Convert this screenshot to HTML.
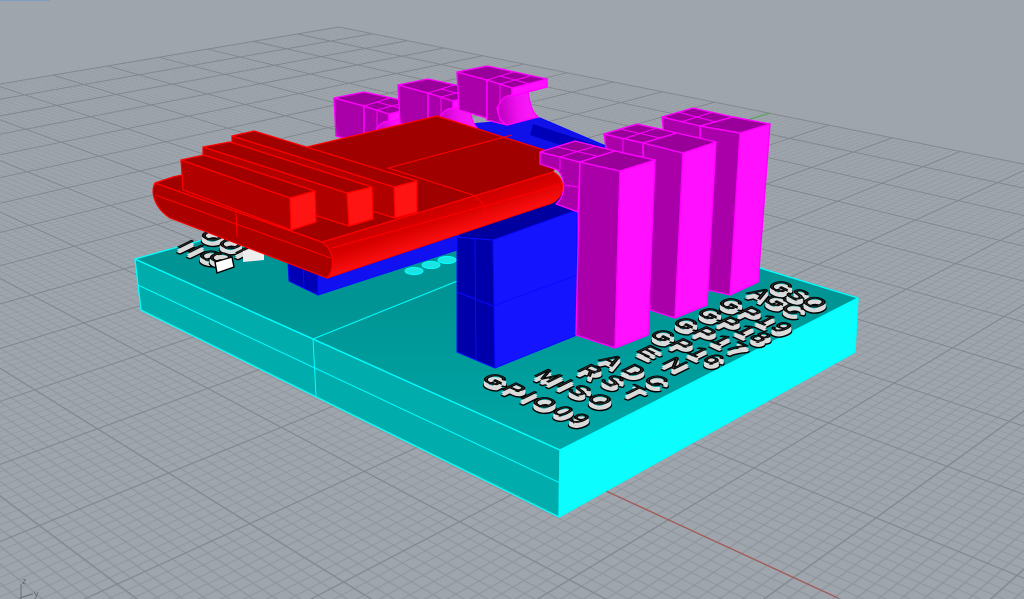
<!DOCTYPE html>
<html><head><meta charset="utf-8"><title>3D viewport</title>
<style>
html,body{margin:0;padding:0;background:#9ea5ad;width:1024px;height:599px;overflow:hidden}
#vp{position:absolute;left:0;top:0;width:1024px;height:599px;overflow:hidden;contain:strict;background:#9ea5ad}
#grid{position:absolute;left:0;top:0;width:1850px;height:1400px;transform-origin:0 0;
transform:matrix3d(.24023,.0582,0,-.00024766,-.49046,.060988,0,-.00025518,0,0,1,0,339,27,0,1);
background-color:#9ea5ad;
background-image:linear-gradient(to right,#8e949c 1px,transparent 1px),linear-gradient(to bottom,#8e949c 1px,transparent 1px);
background-size:10px 10px,10px 10px}
svg{display:block;position:absolute;left:0;top:0}
.c{stroke:#0ff;stroke-width:1.3;stroke-linejoin:round}
.b{stroke:#0a0aff;stroke-width:1;stroke-linejoin:round}
.m{stroke:#f0f;stroke-width:1.4;stroke-linejoin:round}
.r{stroke:#f00;stroke-width:1.2;stroke-linejoin:round}
.sc{stroke:#0ff;stroke-width:1;fill:none}
.sb{stroke:#0a0aff;stroke-width:1;fill:none}
.sm{stroke:#f0f;stroke-width:1;fill:none}
.sr{stroke:#f00;stroke-width:1;fill:none}
text.a,text.w,text.t{font-family:"Liberation Sans",sans-serif;font-size:23px;stroke-linejoin:round}
text.a{fill:#000;stroke:#000;stroke-width:3}
text.w{fill:#d6d6d6;stroke:#dcdcdc;stroke-width:1.5}
text.t{fill:#3a3a3a;stroke:#000;stroke-width:1.2}
text.ax{font-family:"Liberation Sans",sans-serif;font-size:9px;fill:#636870}
</style></head><body>
<div id="vp">
<div id="grid"></div>
<svg width="1024" height="599" viewBox="0 0 1024 599" xmlns="http://www.w3.org/2000/svg">
<defs>
<linearGradient id="top" x1="0" y1="300" x2="0" y2="450" gradientUnits="userSpaceOnUse"><stop offset="0" stop-color="#009494"/><stop offset="1" stop-color="#00a6a6"/></linearGradient>
<linearGradient id="rim" x1="425" y1="205" x2="442" y2="255" gradientUnits="userSpaceOnUse"><stop offset="0" stop-color="#c00000"/><stop offset=".35" stop-color="#d80000"/><stop offset=".75" stop-color="#ff1010"/><stop offset="1" stop-color="#e00000"/></linearGradient>
<linearGradient id="cyl" x1="497" y1="110" x2="538" y2="105" gradientUnits="userSpaceOnUse"><stop offset="0" stop-color="#b800b8"/><stop offset=".5" stop-color="#f010f0"/><stop offset="1" stop-color="#ff20ff"/></linearGradient>
</defs>
<rect x="0" y="0" width="50" height="1" fill="#7f9ec4"/>
<path fill="none" stroke="#82878e" stroke-width="1" d="M339 27L1100 179.4M297.5 34L1100 204.3M253.8 41.4L1100 232.6M207.7 49.2L1100 264.5M159 57.3L1100 300.9M107.4 66L1100 343.3M52.8 75.1L1100 392.6M-5.3 84.9L1100 451.4M-67.1 95.3L1100 522.2M-133 106.3L1100 609.1M-203.4 118.2L1100 718.7M-278.8 130.8L1100 860.5M-359.7 144.4L1100 1052M-446.9 159L1100 1324M-540.9 174.8L1100 1742"/>
<path fill="none" stroke="#82878e" stroke-width="1" d="M339 27L-100 100.8M372.3 33.7L-100 116.9M407.3 40.7L-100 134.4M444.1 48L-100 153.7M483 55.8L-100 175.2M524.1 64L-100 199.3M567.6 72.7L-100 226.3M613.6 82L-100 257M662.5 91.7L-100 292M714.6 102.1L-100 332.2M770 113.2L-100 379.1M829.3 125.1L-100 434.7M892.7 137.7L-100 501M960.7 151.3L-100 582M1033.9 166L-100 683M1112.9 181.8L-100 812.6M1198.4 198.9L-100 984.7M1291.1 217.4L-100 1223.7M1392.2 237.6L-100 1580"/>
<line x1="500" y1="442" x2="838" y2="598" stroke="#a8564f" stroke-width="1.2"/>
<line x1="770" y1="113" x2="650" y2="150" stroke="#5fa05f" stroke-width="1.2"/>

<!-- axis icon -->
<path d="M21 584V599M20 598L33 594" stroke="#6a6f77" fill="none" stroke-width="1"/>
<text class="ax" x="22" y="584">z</text>
<text class="ax" x="34" y="597">y</text>

<!-- cyan slab -->
<polygon points="135,259 141,310 559,517 560,450" fill="#00acac" class="c"/>
<polygon points="560,450 559,517 855,352 858,298" fill="#0cfdfd" class="c"/>
<polygon points="135,259 446,172 858,298 560,450" fill="url(#top)" class="c"/>
<path class="sc" d="M138,285L560,483L857,325M313,339L316,396M313,339L460,280"/>
<ellipse cx="414" cy="271" rx="9" ry="3.6" fill="#1ce4e4" stroke="#0ff"/>
<ellipse cx="431" cy="265" rx="9" ry="3.6" fill="#1ce4e4" stroke="#0ff"/>
<ellipse cx="447" cy="260" rx="9" ry="3.6" fill="#1ce4e4" stroke="#0ff"/>

<!-- left letters -->
<g>
<text class="a" transform="matrix(.91 .42 -.85 .42 198 241)" textLength="46">OOI</text><text class="w" transform="matrix(.91 .42 -.85 .42 198 240)" textLength="46">OOI</text><text class="w" transform="matrix(.91 .42 -.85 .42 198 238)" textLength="46">OOI</text><text class="t" transform="matrix(.91 .42 -.85 .42 198 235)" textLength="46">OOI</text>
<text class="a" transform="matrix(.91 .42 -.85 .42 176 252)" textLength="40">IIO</text><text class="w" transform="matrix(.91 .42 -.85 .42 176 251)" textLength="40">IIO</text><text class="w" transform="matrix(.91 .42 -.85 .42 176 249)" textLength="40">IIO</text><text class="t" transform="matrix(.91 .42 -.85 .42 176 246)" textLength="40">IIO</text>
<text class="a" transform="matrix(.91 .42 -.85 .42 206 263)">O</text><text class="w" transform="matrix(.91 .42 -.85 .42 206 262)">O</text><text class="w" transform="matrix(.91 .42 -.85 .42 206 260)">O</text><text class="t" transform="matrix(.91 .42 -.85 .42 206 257)">O</text>
</g>
<polygon points="215,262 232,257 234,267 217,273" fill="#fff" stroke="#000" stroke-width="1.4"/>
<polygon points="243,251 264,247 264,260 243,262" fill="#eee"/>

<!-- blue boxes -->
<polygon points="288,262 289,281 318,295 318,270" fill="#0000b4" class="b"/>
<polygon points="318,295 457,250 457,225 318,270" fill="#1010f0" class="b"/>
<path class="sb" d="M303,268L304,288"/>
<polygon points="470,124 540,118 620,152 560,170 470,135" fill="#1010e8" class="b"/>
<polygon points="533,124 617,152 600,158 530,135" fill="#0000b8"/>
<polygon points="457,237 493,240 495,368 457,352" fill="#0000aa" class="b"/>
<polygon points="493,240 577,210 577,335 495,368" fill="#1414ff" class="b"/>
<polygon points="457,237 493,240 577,210 560,190 470,225" fill="#0000a0" class="b"/>
<path class="sb" d="M475,238L476,360M457,292L493,306L577,275"/>

<!-- back magenta pieces -->
<g transform="translate(-123,26)">
<polygon points="457,72 487,80 487,118 459,110" fill="#aa00aa" class="m"/>
<polygon points="487,80 512,88 512,96 505,98 497,108 500,120 507,125 487,120" fill="#aa00aa" class="m"/>
<path d="M507,96L528,92C530,105 532,112 538,117L507,125C495,118 495,102 507,96Z" fill="url(#cyl)" class="m"/>
<polygon points="512,88 547,79 547,87 528,92 512,96" fill="#ff10ff" class="m"/>
<polygon points="457,72 487,66 547,79 512,88 487,80" fill="#990099" class="m"/>
<path class="sm" d="M487,80L513,72M500,76L530,84M500,84L530,76M500,84V102"/>
</g>
<g transform="translate(-59,13)">
<polygon points="457,72 487,80 487,118 459,110" fill="#aa00aa" class="m"/>
<polygon points="487,80 512,88 512,96 505,98 497,108 500,120 507,125 487,120" fill="#aa00aa" class="m"/>
<path d="M507,96L528,92C530,105 532,112 538,117L507,125C495,118 495,102 507,96Z" fill="url(#cyl)" class="m"/>
<polygon points="512,88 547,79 547,87 528,92 512,96" fill="#ff10ff" class="m"/>
<polygon points="457,72 487,66 547,79 512,88 487,80" fill="#990099" class="m"/>
<path class="sm" d="M487,80L513,72M500,76L530,84M500,84L530,76M500,84V102"/>
</g>
<g>
<polygon points="457,72 487,80 487,118 459,110" fill="#aa00aa" class="m"/>
<polygon points="487,80 512,88 512,96 505,98 497,108 500,120 507,125 487,120" fill="#aa00aa" class="m"/>
<path d="M507,96L528,92C530,105 532,112 538,117L507,125C495,118 495,102 507,96Z" fill="url(#cyl)" class="m"/>
<polygon points="512,88 547,79 547,87 528,92 512,96" fill="#ff10ff" class="m"/>
<polygon points="457,72 487,66 547,79 512,88 487,80" fill="#990099" class="m"/>
<path class="sm" d="M487,80L513,72M500,76L530,84M500,84L530,76M500,84V102"/>
</g>

<!-- red part -->
<path d="M155,183L322,242C335,250 335,270 327,278L170,218C155,208 150,193 155,183Z" fill="#aa0000" class="r"/>
<path d="M322,242L553,172C566,178 566,196 552,203L327,278C335,270 335,250 322,242Z" fill="url(#rim)" class="r"/>
<polygon points="437,116 560,155 553,172 322,242 155,183 173,177 307,147" fill="#a00000" class="r"/>
<path class="sr" d="M155,195L331,258M236,210L237,237M512,135L388,168L473,195C482,200 487,210 487,220M332,248L560,185"/>
<!-- bar 3 -->
<polygon points="232,136 394,187 395,218 232,170" fill="#b00000" class="r"/>
<polygon points="232,136 254,131 417,181 394,187" fill="#a00000" class="r"/>
<polygon points="394,187 417,181 417,212 395,218" fill="#ff1414" class="r"/>
<!-- bar 2 -->
<polygon points="203,147 347,193 349,226 203,180" fill="#b00000" class="r"/>
<polygon points="203,147 230,142 372,187 347,193" fill="#a00000" class="r"/>
<polygon points="347,193 372,187 373,219 349,226" fill="#ff1414" class="r"/>
<!-- bar 1 -->
<polygon points="181,160 290,198 291,230 183,190" fill="#b00000" class="r"/>
<polygon points="181,160 204,155 315,191 290,198" fill="#a00000" class="r"/>
<polygon points="290,198 315,191 316,222 291,230" fill="#ff1414" class="r"/>

<!-- column 3 -->
<polygon points="662,117 700,126 700,150 664,135" fill="#aa00aa" class="m"/>
<polygon points="700,126 740,133 730,295 708,290" fill="#aa00aa" class="m"/>
<polygon points="740,133 770,124 758,282 730,295" fill="#ff10ff" class="m"/>
<polygon points="662,117 693,108 733,117 700,126" fill="#990099" class="m"/>
<polygon points="700,126 733,117 770,124 740,133" fill="#990099" class="m"/>
<path class="sm" d="M677,112L716,122M681,122L713,112"/>
<!-- column 2 -->
<polygon points="604,134 643,143 643,170 606,148" fill="#aa00aa" class="m"/>
<polygon points="643,143 683,153 675,318 650,310" fill="#aa00aa" class="m"/>
<polygon points="683,153 716,142 707,305 675,318" fill="#ff10ff" class="m"/>
<polygon points="604,134 637,124 677,133 643,143" fill="#990099" class="m"/>
<polygon points="643,143 677,133 716,142 683,153" fill="#990099" class="m"/>
<path class="sm" d="M620,129L660,138M623,139L657,128M623,138V160"/>
<!-- column 1 -->
<path d="M540,152L580,162L578,212L556,204C566,195 566,180 558,170L540,164Z" fill="#aa00aa" class="m"/>
<path class="sm" d="M560,158V170M565,185L578,187"/>
<polygon points="580,162 620,171 615,348 576,335" fill="#aa00aa" class="m"/>
<polygon points="620,171 655,160 648,335 615,348" fill="#ff10ff" class="m"/>
<polygon points="540,152 575,141 615,151 580,162" fill="#990099" class="m"/>
<polygon points="580,162 615,151 655,160 620,171" fill="#990099" class="m"/>
<path class="sm" d="M557,147L597,156M560,157L595,146"/>

<!-- letters -->
<g>
<text class="a" transform="matrix(.91 .42 -.85 .42 480 385)" textLength="108">GPIO09</text><text class="w" transform="matrix(.91 .42 -.85 .42 480 384)" textLength="108">GPIO09</text><text class="w" transform="matrix(.91 .42 -.85 .42 480 382)" textLength="108">GPIO09</text><text class="t" transform="matrix(.91 .42 -.85 .42 480 379)" textLength="108">GPIO09</text>
<text class="a" transform="matrix(.91 .42 -.85 .42 533 381)" textLength="75">MISO</text><text class="w" transform="matrix(.91 .42 -.85 .42 533 380)" textLength="75">MISO</text><text class="w" transform="matrix(.91 .42 -.85 .42 533 378)" textLength="75">MISO</text><text class="t" transform="matrix(.91 .42 -.85 .42 533 375)" textLength="75">MISO</text>
<text class="a" transform="matrix(.91 .42 -.85 .42 576 376)" textLength="63">RST</text><text class="w" transform="matrix(.91 .42 -.85 .42 576 375)" textLength="63">RST</text><text class="w" transform="matrix(.91 .42 -.85 .42 576 373)" textLength="63">RST</text><text class="t" transform="matrix(.91 .42 -.85 .42 576 370)" textLength="63">RST</text>
<text class="a" transform="matrix(.91 .42 -.85 .42 598 366)" textLength="65">ADC</text><text class="w" transform="matrix(.91 .42 -.85 .42 598 365)" textLength="65">ADC</text><text class="w" transform="matrix(.91 .42 -.85 .42 598 363)" textLength="65">ADC</text><text class="t" transform="matrix(.91 .42 -.85 .42 598 360)" textLength="65">ADC</text>
<text class="a" transform="matrix(.91 .42 -.85 .42 635 357)" textLength="45">EN</text><text class="w" transform="matrix(.91 .42 -.85 .42 635 356)" textLength="45">EN</text><text class="w" transform="matrix(.91 .42 -.85 .42 635 354)" textLength="45">EN</text><text class="t" transform="matrix(.91 .42 -.85 .42 635 351)" textLength="45">EN</text>
<text class="a" transform="matrix(.91 .42 -.85 .42 648 341)" textLength="71">GP16</text><text class="w" transform="matrix(.91 .42 -.85 .42 648 340)" textLength="71">GP16</text><text class="w" transform="matrix(.91 .42 -.85 .42 648 338)" textLength="71">GP16</text><text class="t" transform="matrix(.91 .42 -.85 .42 648 335)" textLength="71">GP16</text>
<text class="a" transform="matrix(.91 .42 -.85 .42 671 329)" textLength="71">GP17</text><text class="w" transform="matrix(.91 .42 -.85 .42 671 328)" textLength="71">GP17</text><text class="w" transform="matrix(.91 .42 -.85 .42 671 326)" textLength="71">GP17</text><text class="t" transform="matrix(.91 .42 -.85 .42 671 323)" textLength="71">GP17</text>
<text class="a" transform="matrix(.91 .42 -.85 .42 695 319)" textLength="71">GP18</text><text class="w" transform="matrix(.91 .42 -.85 .42 695 318)" textLength="71">GP18</text><text class="w" transform="matrix(.91 .42 -.85 .42 695 316)" textLength="71">GP18</text><text class="t" transform="matrix(.91 .42 -.85 .42 695 313)" textLength="71">GP18</text>
<text class="a" transform="matrix(.91 .42 -.85 .42 716 309)" textLength="71">GP19</text><text class="w" transform="matrix(.91 .42 -.85 .42 716 308)" textLength="71">GP19</text><text class="w" transform="matrix(.91 .42 -.85 .42 716 306)" textLength="71">GP19</text><text class="t" transform="matrix(.91 .42 -.85 .42 716 303)" textLength="71">GP19</text>
<text class="a" transform="matrix(.91 .42 -.85 .42 746 299)" textLength="53">AGC</text><text class="w" transform="matrix(.91 .42 -.85 .42 746 298)" textLength="53">AGC</text><text class="w" transform="matrix(.91 .42 -.85 .42 746 296)" textLength="53">AGC</text><text class="t" transform="matrix(.91 .42 -.85 .42 746 293)" textLength="53">AGC</text>
<text class="a" transform="matrix(.91 .42 -.85 .42 766 292)" textLength="55">GSO</text><text class="w" transform="matrix(.91 .42 -.85 .42 766 291)" textLength="55">GSO</text><text class="w" transform="matrix(.91 .42 -.85 .42 766 289)" textLength="55">GSO</text><text class="t" transform="matrix(.91 .42 -.85 .42 766 286)" textLength="55">GSO</text>
</g>
</svg>
</div>
</body></html>
